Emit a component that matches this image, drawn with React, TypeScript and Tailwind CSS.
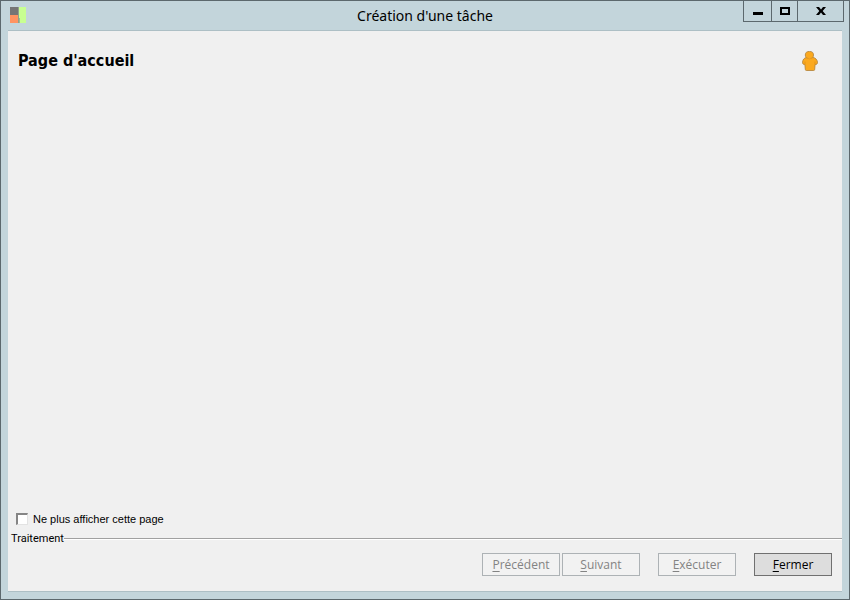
import React, { useState } from "react";

function AppIcon() {
  return (
    <svg width="16" height="16" viewBox="0 0 16 16" shapeRendering="crispEdges">
      <rect width="8" height="8" fill="#757575" />
      <rect y="8" width="8" height="8" fill="#ff9361" />
      <rect x="8" width="1" height="16" fill="#8f9f8b" />
      <rect x="9" width="7" height="16" fill="#c8ff91" />
      <rect x="9" y="11" width="1" height="5" fill="#a3b98e" />
    </svg>
  );
}

function PersonIcon() {
  return (
    <svg width="16" height="20" viewBox="0 0 16 20">
      <path
        d="M4.6 6.4H11C13.4 6.8 15.2 8.6 15.5 11.2C15.6 12.8 14.6 13.7 13.1 13.6L12.7 18.4Q12.6 19.5 11.6 19.5H4.4Q3.4 19.5 3.3 18.4L2.9 13.6C1.4 13.7.4 12.8.5 11.2C.8 8.6 2.2 6.8 4.6 6.4Z"
        fill="#fba91f"
        stroke="#b0803a"
        strokeWidth=".8"
      />
      <path d="M3 10.6V13.4M13 10.6V13.4" stroke="#d98b1a" strokeWidth=".7" />
      <ellipse cx="7.4" cy="4" rx="4.1" ry="3.6" fill="#fba91f" stroke="#b0803a" strokeWidth=".8" />
      <path d="M4.2 6.8Q7.4 9 10.8 6.8" fill="#fba91f" stroke="#e29a25" strokeWidth=".6" />
    </svg>
  );
}

function TitleBar({ title }: { title: string }) {
  return (
    <header className="grid h-[29px] grid-cols-[1fr_auto_1fr]">
      <div className="pt-[6px] pl-[9px]">
        <AppIcon />
      </div>
      <h1 className="font-['Noto_Sans',sans-serif] text-[14px] leading-[29px]">{title}</h1>
      <div className="mr-[5px] flex h-[21px] justify-self-end border-x border-b border-[#5c686d]">
        <button aria-label="Réduire" className="flex w-[27px] items-center justify-center">
          <svg width="10" height="3" className="mt-[4px]" shapeRendering="crispEdges">
            <rect width="10" height="3" />
          </svg>
        </button>
        <button
          aria-label="Agrandir"
          className="flex w-[27px] items-center justify-center border-x border-[#5c686d]"
        >
          <svg width="10" height="8" shapeRendering="crispEdges">
            <path d="M0 0H10V8H0ZM2 2V6H8V2Z" fillRule="evenodd" />
          </svg>
        </button>
        <button aria-label="Fermer la fenêtre" className="flex w-[45px] items-center justify-center">
          <svg width="10" height="8" viewBox="0 0 10 8">
            <path d="M0 0H3L5 2.5L7 0H10L6.7 4L10 8H7L5 5.5L3 8H0L3.3 4Z" />
          </svg>
        </button>
      </div>
    </header>
  );
}

type WizardButtonProps = {
  label: string;
  disabled?: boolean;
};

function WizardButton({ label, disabled }: WizardButtonProps) {
  return (
    <button
      disabled={disabled}
      className="h-[23px] w-[78px] border border-[#707070] bg-[#dddddd] font-['Open_Sans',sans-serif] text-[12px] leading-[21px] disabled:border-[#adb2b5] disabled:bg-[#f2f2f2] disabled:text-[#838383]"
    >
      <span className="underline underline-offset-2">{label[0]}</span>
      {label.slice(1)}
    </button>
  );
}

export default function App() {
  const [hidePage, setHidePage] = useState(false);

  return (
    <div className="flex min-h-screen flex-col border border-[#5c686d] bg-[#c3d5db] font-['Noto_Sans',sans-serif] text-black">
      <TitleBar title="Création d'une tâche" />
      <main className="mx-[7px] mb-[7px] flex flex-1 flex-col border-y border-[#adbfc5] bg-[#f0f0f0]">
        <div className="flex items-start justify-between pt-5 pr-6 pl-[10px]">
          <h2 className="font-['DejaVu_Sans_Condensed','Noto_Sans',sans-serif] text-[16px] leading-5 font-bold">
            Page d'accueil
          </h2>
          <PersonIcon />
        </div>

        <label className="mt-auto flex h-4 items-center gap-[5px] self-start pl-2 font-['Liberation_Sans',sans-serif] text-[11px]">
          <input
            type="checkbox"
            checked={hidePage}
            onChange={(e) => setHidePage(e.target.checked)}
            className="h-3 w-3 appearance-none border-t-2 border-r border-b border-l-2 border-t-[#858585] border-r-[#e3e3e3] border-b-[#e3e3e3] border-l-[#858585] bg-white checked:bg-[#444444]"
          />
          Ne plus afficher cette page
        </label>

        <div className="mt-1 flex h-4 items-center pl-[3px] font-['Roboto',sans-serif] text-[11px]">
          <span>Traitement</span>
          <div className="h-[2px] flex-1 border-t border-b border-t-[#a0a0a0] border-b-white" />
        </div>

        <footer className="flex justify-end gap-[18px] pt-[6px] pr-[10px] pb-[15px]">
          <div className="flex gap-[2px]">
            <WizardButton label="Précédent" disabled />
            <WizardButton label="Suivant" disabled />
          </div>
          <WizardButton label="Exécuter" disabled />
          <WizardButton label="Fermer" />
        </footer>
      </main>
    </div>
  );
}
